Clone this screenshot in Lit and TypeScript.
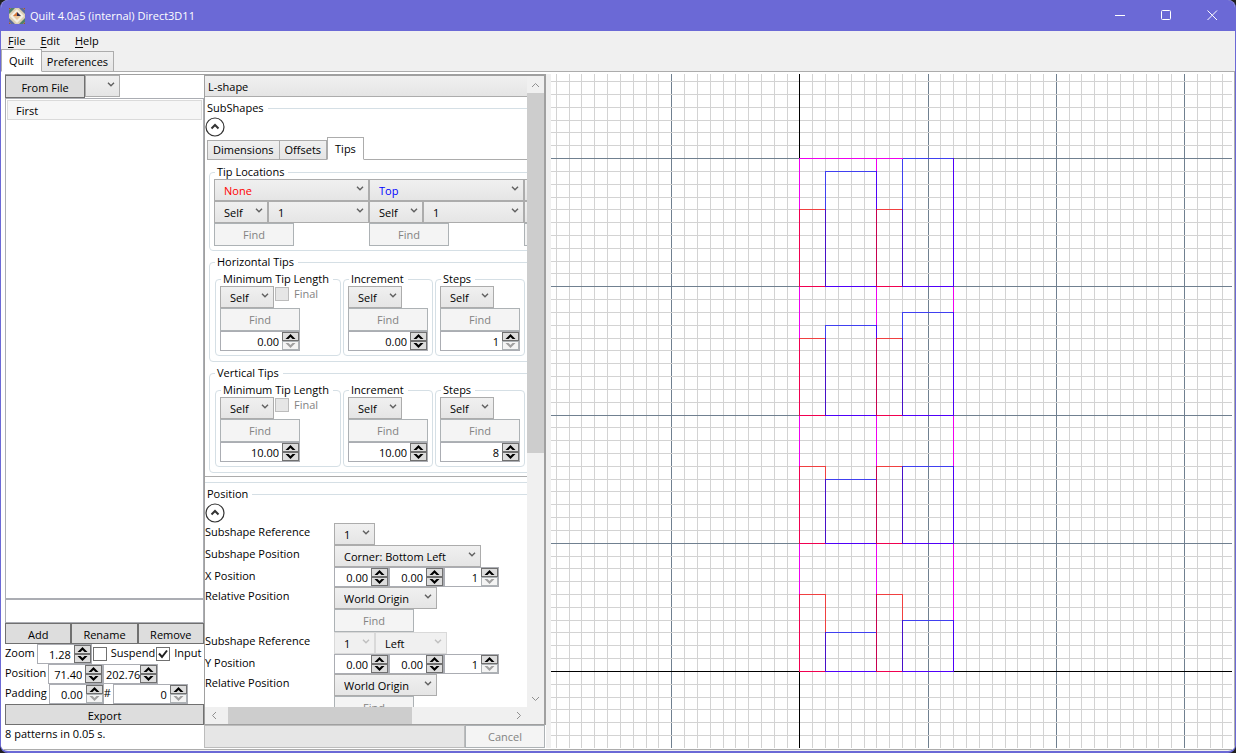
import { LitElement, html, svg, css, nothing } from "lit";
import { customElement } from "lit/decorators.js";
import { classMap } from "lit/directives/class-map.js";

const ORIGIN_X = 248.93;
const ORIGIN_Y = 597.4;
const STEP = 12.82;

type Seg = [x1: number, y1: number, x2: number, y2: number, colour: string];

const MAGENTA = "#f000f0";
const RED = "#f04040";
const CRIMSON = "#f00050";
const DEEP = "#c80050";
const BLUE = "#4040f0";
const VIOLET = "#5000f8";
const INDIGO = "#4810c8";

/* Columns sit at 0, 2, 6, 8 and 12 grid cells; heights are counted in cells too. */
interface Row { base: number; red: number; first: number; second: number; top: number }
const rows: Row[] = [
  { base: 0, red: 6, first: 3, second: 4, top: 10 },
  { base: 10, red: 6, first: 5, second: 6, top: 20 },
  { base: 20, red: 6, first: 7, second: 8, top: 30 },
  { base: 30, red: 6, first: 9, second: 10, top: 40 },
];

function rowSegments(r: Row): Seg[] {
  const b = r.base;
  const red = b + r.red;
  const a = b + r.first;
  const c = b + r.second;
  const out: Seg[] = [
    [0, b, 0, r.top, MAGENTA],
    [6, b, 6, r.top, MAGENTA],
    [12, b, 12, r.top, MAGENTA],
    [2, b, 2, red, RED],
    [8, b, 8, red, RED],
    [0, red, 2, red, RED],
    [6, red, 8, red, RED],
    [0, b, 0, red, CRIMSON],
    [2, b, 2, a, BLUE],
    [8, b, 8, c, BLUE],
    [2, a, 6, a, BLUE],
    [8, c, 12, c, BLUE],
    [2, b, 2, Math.min(a, red), INDIGO],
    [8, b, 8, Math.min(c, red), INDIGO],
    [12, b, 12, c, VIOLET],
    [0, b, 2, b, CRIMSON],
    [6, b, 8, b, CRIMSON],
    [2, b, 6, b, VIOLET],
    [8, b, 12, b, VIOLET],
  ];
  if (a > red) out.push([6, red, 6, a, VIOLET]);
  out.push([6, b, 6, red, DEEP]);
  return out;
}

const gx = (k: number) => Math.floor(ORIGIN_X + k * STEP);
const gy = (k: number) => Math.floor(ORIGIN_Y - k * STEP);

function line(x1: number, y1: number, x2: number, y2: number, colour: string) {
  const x = Math.min(x1, x2);
  const y = Math.min(y1, y2);
  return svg`<rect x=${x} y=${y} width=${Math.abs(x2 - x1) + 1} height=${Math.abs(y2 - y1) + 1} fill=${colour}></rect>`;
}

const range = (from: number, to: number) => Array.from({ length: to - from + 1 }, (_, i) => from + i);
const gridColour = (k: number) => (k % 10 === 0 ? "#708090" : "#d3d3d3");

interface ComboOpts { w: string; disabled?: boolean; tone?: string; id?: string }

@customElement("app-root")
export class AppRoot extends LitElement {
  static styles = css`
    :host {
      display: block;
      height: 100vh;
      background: #202020;
      font: 11px/16px "Open Sans", "Noto Sans", sans-serif;
      color: #000;
    }
    * { box-sizing: border-box; }
    button, input, select { font: inherit; color: inherit; margin: 0; border-radius: 0; }
    svg { display: block; }
    .window {
      height: 100%;
      display: flex;
      flex-direction: column;
      background: #f0f0f0;
      border: solid #6b69d6;
      border-width: 0 1px 2px;
      border-radius: 8px;
      overflow: hidden;
    }
    .title {
      height: 31px;
      flex: none;
      display: flex;
      align-items: center;
      background: #6b69d6;
      color: #fff;
      padding-left: 8px;
    }
    .title h1 { font: inherit; margin: 0 auto 0 5px; }
    .caption {
      width: 46px;
      height: 31px;
      padding: 0;
      border: 0;
      background: none;
      display: grid;
      place-items: center;
    }
    .menu { height: 18px; flex: none; display: flex; gap: 15px; padding: 2px 7px 0; }
    .menu button { border: 0; padding: 0; background: none; }
    .menu u { text-underline-offset: 2px; }
    .tabs { display: flex; align-items: flex-end; flex: none; position: relative; }
    .tab {
      height: 21px;
      padding: 0 5px;
      border: 1px solid #acacac;
      border-left-width: 0;
      background: linear-gradient(#f0f0f0, #e5e5e5);
      white-space: nowrap;
    }
    .tab.first { border-left-width: 1px; }
    .tab.on { height: 23px; border-left-width: 1px; border-bottom-color: #fff; background: #fff; padding: 0 7px; }
    .fill { flex: 1; align-self: stretch; border-bottom: 1px solid #acacac; }
    .page {
      flex: 1;
      min-height: 0;
      display: grid;
      grid-template-columns: 199px 342px 5px minmax(0, 1fr);
      background: #fff;
      border: solid #acacac;
      border-width: 0 1px 1px 0;
      padding: 2px 2px 1px 4px;
      margin-bottom: 1px;
    }
    .side { display: flex; flex-direction: column; min-height: 0; border-top: 1px solid #a0a0a0; }
    .row { display: flex; align-items: flex-start; white-space: nowrap; }
    .btn {
      height: 21px;
      padding: 2px 0 0;
      border: 1px solid #707070;
      background: #ddd;
      flex: 1;
    }
    .btn.file { flex: none; width: 80px; height: 23px; }
    .btn.find, .btn.cancel {
      flex: none;
      width: 80px;
      height: 23px;
      padding: 0;
      border-color: #adb2b5;
      background: #f4f4f4;
      color: #838383;
      display: block;
    }
    .list {
      flex: 1;
      min-height: 0;
      margin: 0;
      padding: 1px;
      list-style: none;
      border: 1px solid #abadb3;
    }
    .list li {
      height: 20px;
      padding: 2px 8px;
      background: #f6f6f6;
      border: 1px solid #dadada;
    }
    .name { height: 24px; border: 1px solid #abadb3; width: 100%; background: #fff; flex: none; padding: 0 4px; }
    .tool { height: 20px; flex: none; }
    .tool label { flex: none; padding-top: 1px; }
    .tool .spin { margin-left: 2px; }
    .tool .spin + .spin { margin-left: 0; }
    .status { height: 23px; margin: 0; padding-top: 1px; }

    .combo { display: inline-grid; flex: none; }
    .combo select {
      grid-area: 1 / 1;
      appearance: none;
      height: 22px;
      width: 100%;
      padding: 2px 0 0 9px;
      border: 1px solid #acacac;
      background: linear-gradient(#f0f0f0, #e5e5e5);
    }
    .combo select:disabled { opacity: 1; border-color: #d9d9d9; background: #f0f0f0; }
    .combo svg { grid-area: 1 / 1; justify-self: end; margin: 7px 5px 0 0; pointer-events: none; stroke: #606060; }
    .combo.off svg { stroke: #bfbfbf; }
    .combo.red select { color: #f00; }
    .combo.blue select { color: #00f; }
    .w35 { width: 35px; }
    .w41 { width: 41px; }
    .w54 { width: 54px; }
    .w72 { width: 72px; }
    .w101 { width: 101px; }
    .w103 { width: 103px; }
    .w147 { width: 147px; }
    .w155 { width: 155px; }

    .spin {
      display: inline-flex;
      flex: none;
      width: 55px;
      height: 20px;
      border: 1px solid #abadb3;
      background: #fff;
    }
    .spin.wide { width: 80px; }
    .spin.mid { width: 75px; }
    .spin input {
      flex: 1;
      min-width: 0;
      width: 0;
      padding: 1px 3px 0 1px;
      border: 0;
      background: none;
      text-align: right;
    }
    .spin input.long { padding-right: 0; }
    .arrows { display: grid; grid-template-rows: 9px 9px; width: 17px; }
    .arrows button {
      padding: 0;
      border: 1px solid #707070;
      background: #ddd;
      display: grid;
      place-items: center;
      fill: #000;
    }
    .arrows button:disabled { border-color: #adb2b5; background: #f4f4f4; fill: #a0a0a0; }

    .check { display: inline-flex; gap: 4px; white-space: nowrap; }
    .check input {
      appearance: none;
      width: 14px;
      height: 14px;
      border: 1px solid #707070;
      background: #fff;
      margin: 2px 0 0 1px;
    }
    .check input:checked {
      background: #fff url("data:image/svg+xml,%3Csvg xmlns='http://www.w3.org/2000/svg' viewBox='0 0 12 12'%3E%3Cpath d='M2 5.5 5 9 10 2.5' fill='none' stroke='%23212121' stroke-width='2'/%3E%3C/svg%3E");
    }
    .check input:disabled { border-color: #bcbcbc; background: #e6e6e6; margin-top: 1px; }
    .check.dim { color: #838383; gap: 5px; }

    .middle { display: grid; grid-template-rows: minmax(0, 1fr) 23px; min-height: 0; }
    .scroller {
      display: grid;
      grid-template: minmax(0, 1fr) 17px / minmax(0, 1fr) 17px;
      border: solid #a0a0a0;
      border-width: 2px 2px 1px 1px;
      min-height: 0;
    }
    .view { overflow: hidden; background: #fff; }
    .content { width: 500px; }
    .bar { background: #f0f0f0; display: flex; }
    .bar.v { flex-direction: column; }
    .bar button { width: 17px; height: 17px; flex: none; border: 0; padding: 0; background: none; display: grid; place-items: center; }
    .thumb { background: #cdcdcd; }
    .bar.v .thumb { height: 57%; margin-bottom: auto; }
    .bar.h .thumb { width: 57%; margin: 0 auto 0 6px; }
    .corner { background: #f0f0f0; }
    .foot { display: flex; padding-right: 1px; }
    .progress { flex: 1; border: 1px solid #bcbcbc; background: #e6e6e6; }

    .head {
      display: block;
      width: 100%;
      height: 21px;
      padding: 2px 3px 0;
      text-align: left;
      border: 0;
      border-bottom: 1px solid #acacac;
      background: linear-gradient(#f0f0f0, #e5e5e5);
    }
    fieldset { margin: 0; min-width: 0; padding: 0 4px; border: 1px solid #d5dfe5; border-radius: 4px; }
    legend { margin-left: 1px; padding: 0 4px 0 2px; line-height: 14px; }
    .section { border-width: 1px 0; border-radius: 0; padding: 0 0 5px; margin-top: 4px; }
    .section > legend { margin: 0; }
    .section.last { border-bottom: 0; margin-top: 4px; }
    .round { display: block; border: 0; padding: 0; margin-top: 2px; background: none; }
    .inner-tabs { margin-left: 2px; }
    .inner-tabs .tab { height: 20px; }
    .inner-tabs .tab.on { height: 23px; }
    .inner { border-bottom: 1px solid #acacac; padding: 5px 4px 3px; display: grid; gap: 4px; }
    .locations { display: flex; padding-bottom: 4px; }
    .cols { display: flex; }
    .loc { display: grid; width: 155px; }
    .dims { padding-bottom: 5px; }
    .dims > .cols { gap: 2px; padding: 3px 0 0 1px; }
    .dim-group { padding-bottom: 4px; }
    .dim-group.long { min-width: 126px; }
    .stack { display: grid; justify-items: start; }
    .form { display: grid; grid-template-columns: 129px auto; align-items: start; }
    .form .row { grid-column: 2; }
    .form label { grid-column: 1; white-space: nowrap; padding-top: 1px; }
    .splitter { background: #f0f0f0; }
    .plot { min-width: 0; width: 100%; height: 100%; overflow: hidden; shape-rendering: crispEdges; background: #fff; }
  `;

  private chevron() {
    return html`<svg width="8" height="5" viewBox="0 0 8 5" fill="none" stroke-width="1.4"><path d="M1 .7 4 3.7 7 .7"></path></svg>`;
  }

  private combo(label: string, value: string, o: ComboOpts) {
    return html`<span class=${classMap({ combo: true, [o.w]: true, off: !!o.disabled, [o.tone ?? "plain"]: true })}>
      <select id=${o.id ?? nothing} aria-label=${label} ?disabled=${o.disabled}>
        ${value ? html`<option selected>${value}</option>` : nothing}
      </select>${this.chevron()}</span>`;
  }

  private spin(label: string, value: string, size = "", floor = false, id?: string) {
    return html`<span class="spin ${size}">
      <input id=${id ?? nothing} class=${value.length > 5 ? "long" : ""} aria-label=${label} .value=${value} />
      <span class="arrows">
        <button aria-label="Increase"><svg width="11" height="5" viewBox="0 0 11 5"><path d="M0.5 5 5.5 0 10.5 5H7.5L5.5 3 3.5 5Z"></path></svg></button>
        <button aria-label="Decrease" ?disabled=${floor}><svg width="11" height="5" viewBox="0 0 11 5"><path d="M0.5 0 5.5 5 10.5 0H7.5L5.5 2 3.5 0Z"></path></svg></button>
      </span></span>`;
  }

  private find() {
    return html`<button class="btn find" disabled>Find</button>`;
  }

  private round(label: string) {
    return html`<button class="round" aria-label=${label}><svg width="20" height="20" viewBox="0 0 20 20" fill="none" stroke="#333">
      <circle cx="10" cy="10" r="9" fill="#fff" stroke-width="1.2"></circle><path d="M6.5 11.5 10 8 13.5 11.5" stroke-width="2"></path></svg></button>`;
  }

  private location(value: string, tone: string) {
    return html`<div class="loc">
      ${this.combo("Tip location", value, { w: "w155", tone })}
      <div class="row">${this.combo("Source", "Self", { w: "w54" })}${this.combo("Index", "1", { w: "w101" })}</div>
      ${this.find()}
    </div>`;
  }

  private dimGroup(name: string, value: string, floor: boolean, final = false) {
    return html`<fieldset class="dim-group ${final ? "long" : ""}">
      <legend>${name}</legend>
      <div class="stack">
        <div class="row">${this.combo("Source", "Self", { w: "w54" })}${final
          ? html`<label class="check dim"><input type="checkbox" disabled />Final</label>`
          : nothing}</div>
        ${this.find()}
        ${this.spin(name, value, "wide", floor)}
      </div>
    </fieldset>`;
  }

  private tips(name: string, v: [string, boolean][]) {
    return html`<fieldset class="dims">
      <legend>${name}</legend>
      <div class="cols">
        ${this.dimGroup("Minimum Tip Length", v[0][0], v[0][1], true)}
        ${this.dimGroup("Increment", v[1][0], v[1][1])}
        ${this.dimGroup("Steps", v[2][0], v[2][1])}
      </div>
    </fieldset>`;
  }

  private axisForm(axis: string) {
    const id = axis.toLowerCase();
    return html`
      <label for="${id}-pos">${axis} Position</label>
      <div class="row">${this.spin(`${axis} base`, "0.00", "", false, `${id}-pos`)}${this.spin(`${axis} increment`, "0.00")}${this.spin(`${axis} steps`, "1", "", true)}</div>
      <label for="${id}-rel">Relative Position</label>
      <div class="row">${this.combo("Relative Position", "World Origin", { w: "w103", id: `${id}-rel` })}</div>
      <div class="row">${this.find()}</div>`;
  }

  private plot() {
    const h = range(-40, 200);
    const v = range(-60, 120);
    return html`<svg class="plot" role="img" aria-label="Pattern preview">
      ${v.map((k) => svg`<rect x=${gx(k)} y="0" width="1" height="100%" fill=${gridColour(k)}></rect>`)}
      ${h.map((k) => svg`<rect x="0" y=${gy(k)} width="100%" height="1" fill=${gridColour(k)}></rect>`)}
      <rect x="0" y=${gy(0)} width="100%" height="1" fill="#000"></rect>
      <rect x=${gx(0)} y="0" width="1" height="100%" fill="#000"></rect>
      ${rows.flatMap(rowSegments).map(([x1, y1, x2, y2, c]) => line(gx(x1), gy(y1), gx(x2), gy(y2), c))}
      ${line(gx(0), gy(40), gx(8), gy(40), MAGENTA)}
    </svg>`;
  }

  render() {
    return html`<div class="window">
      <header class="title">
        <svg width="16" height="16" viewBox="0 0 16 16">
          <rect width="16" height="16" fill="#dccfb4"></rect>
          <path d="M2 0h4L0 6V2ZM14 16h-4l6-6v4Z" fill="#4f7f6c"></path>
          <path d="M14 0h-4l6 6V2ZM2 16h4l-6-6v4Z" fill="#5a6a9c"></path>
          <path d="M0 0h2L0 2ZM16 0v2l-2-2ZM0 16v-2l2 2ZM16 16h-2l2-2Z" fill="#9c4f3c"></path>
          <path d="M8 1 15 8 8 15 1 8Z" fill="#f4efe4"></path>
          <path d="M8 4 12 8 8 12 4 8Z" fill="#e8c8a0"></path>
          <path d="M8 4 12 8H8Z" fill="#2c2c4c"></path>
          <path d="M8 4v4H4Z" fill="#d87838"></path>
        </svg>
        <h1>Quilt 4.0a5 (internal) Direct3D11</h1>
        <button class="caption" aria-label="Minimize"><svg width="11" height="11" stroke="#fff"><path d="M0 5.5H10"></path></svg></button>
        <button class="caption" aria-label="Maximize"><svg width="11" height="11" fill="none" stroke="#fff"><rect x=".5" y=".5" width="9" height="9" rx="1"></rect></svg></button>
        <button class="caption" aria-label="Close"><svg width="11" height="11" stroke="#fff"><path d="M.5 .5 10 10M10 .5 .5 10"></path></svg></button>
      </header>
      <nav class="menu">
        <button><u>F</u>ile</button><button><u>E</u>dit</button><button><u>H</u>elp</button>
      </nav>
      <div class="tabs" role="tablist">
        <button class="tab on" role="tab" aria-selected="true">Quilt</button><button class="tab" role="tab">Preferences</button><span class="fill"></span>
      </div>
      <main class="page">
        <section class="side">
          <div class="row"><button class="btn file">From File</button>${this.combo("Recent files", "", { w: "w35" })}</div>
          <ul class="list"><li>First</li></ul>
          <input class="name" aria-label="Name" />
          <div class="row"><button class="btn">Add</button><button class="btn">Rename</button><button class="btn">Remove</button></div>
          <div class="row tool">
            <label for="zoom">Zoom</label>${this.spin("Zoom", "1.28", "", false, "zoom")}
            <label class="check"><input type="checkbox" />Suspend</label>
            <label class="check"><input type="checkbox" checked />Input</label>
          </div>
          <div class="row tool"><label for="px">Position</label>${this.spin("Position X", "71.40", "", false, "px")}${this.spin("Position Y", "202.76")}</div>
          <div class="row tool"><label for="pad">Padding</label>${this.spin("Padding", "0.00", "", true, "pad")}<label for="count">#</label>${this.spin("Count", "0", "mid", true, "count")}</div>
          <div class="row"><button class="btn">Export</button></div>
          <p class="status">8 patterns in 0.05 s.</p>
        </section>
        <section class="middle">
          <div class="scroller">
            <div class="view"><div class="content">
              <button class="head">L-shape</button>
              <fieldset class="section">
                <legend>SubShapes</legend>
                ${this.round("Collapse SubShapes")}
                <div class="tabs inner-tabs" role="tablist">
                  <button class="tab first" role="tab">Dimensions</button><button class="tab" role="tab">Offsets</button><button class="tab on" role="tab" aria-selected="true">Tips</button><span class="fill"></span>
                </div>
                <div class="inner">
                  <fieldset>
                    <legend>Tip Locations</legend>
                    <div class="locations">${this.location("None", "red")}${this.location("Top", "blue")}${this.location("", "plain")}</div>
                  </fieldset>
                  ${this.tips("Horizontal Tips", [["0.00", true], ["0.00", false], ["1", true]])}
                  ${this.tips("Vertical Tips", [["10.00", false], ["10.00", false], ["8", false]])}
                </div>
              </fieldset>
              <fieldset class="section last">
                <legend>Position</legend>
                ${this.round("Collapse Position")}
                <div class="form">
                  <label for="sub-ref">Subshape Reference</label>
                  <div class="row">${this.combo("Subshape Reference", "1", { w: "w41", id: "sub-ref" })}</div>
                  <label for="sub-pos">Subshape Position</label>
                  <div class="row">${this.combo("Subshape Position", "Corner: Bottom Left", { w: "w147", id: "sub-pos" })}</div>
                  ${this.axisForm("X")}
                  <label for="rel-ref">Subshape Reference</label>
                  <div class="row">${this.combo("Subshape Reference", "1", { w: "w41", disabled: true, id: "rel-ref" })}${this.combo("Side", "Left", { w: "w72", disabled: true })}</div>
                  ${this.axisForm("Y")}
                </div>
              </fieldset>
            </div></div>
            <div class="bar v">
              <button aria-label="Scroll up"><svg width="9" height="6" fill="none" stroke="#909090"><path d="M1 5 4.5 1.5 8 5"></path></svg></button>
              <div class="thumb"></div>
              <button aria-label="Scroll down"><svg width="9" height="6" fill="none" stroke="#909090"><path d="M1 1 4.5 4.5 8 1"></path></svg></button>
            </div>
            <div class="bar h">
              <button aria-label="Scroll left"><svg width="6" height="9" fill="none" stroke="#909090"><path d="M5 1 1.5 4.5 5 8"></path></svg></button>
              <div class="thumb"></div>
              <button aria-label="Scroll right"><svg width="6" height="9" fill="none" stroke="#909090"><path d="M1 1 4.5 4.5 1 8"></path></svg></button>
            </div>
            <div class="corner"></div>
          </div>
          <div class="foot"><div class="progress"></div><button class="btn cancel" disabled>Cancel</button></div>
        </section>
        <div class="splitter"></div>
        ${this.plot()}
      </main>
    </div>`;
  }
}
